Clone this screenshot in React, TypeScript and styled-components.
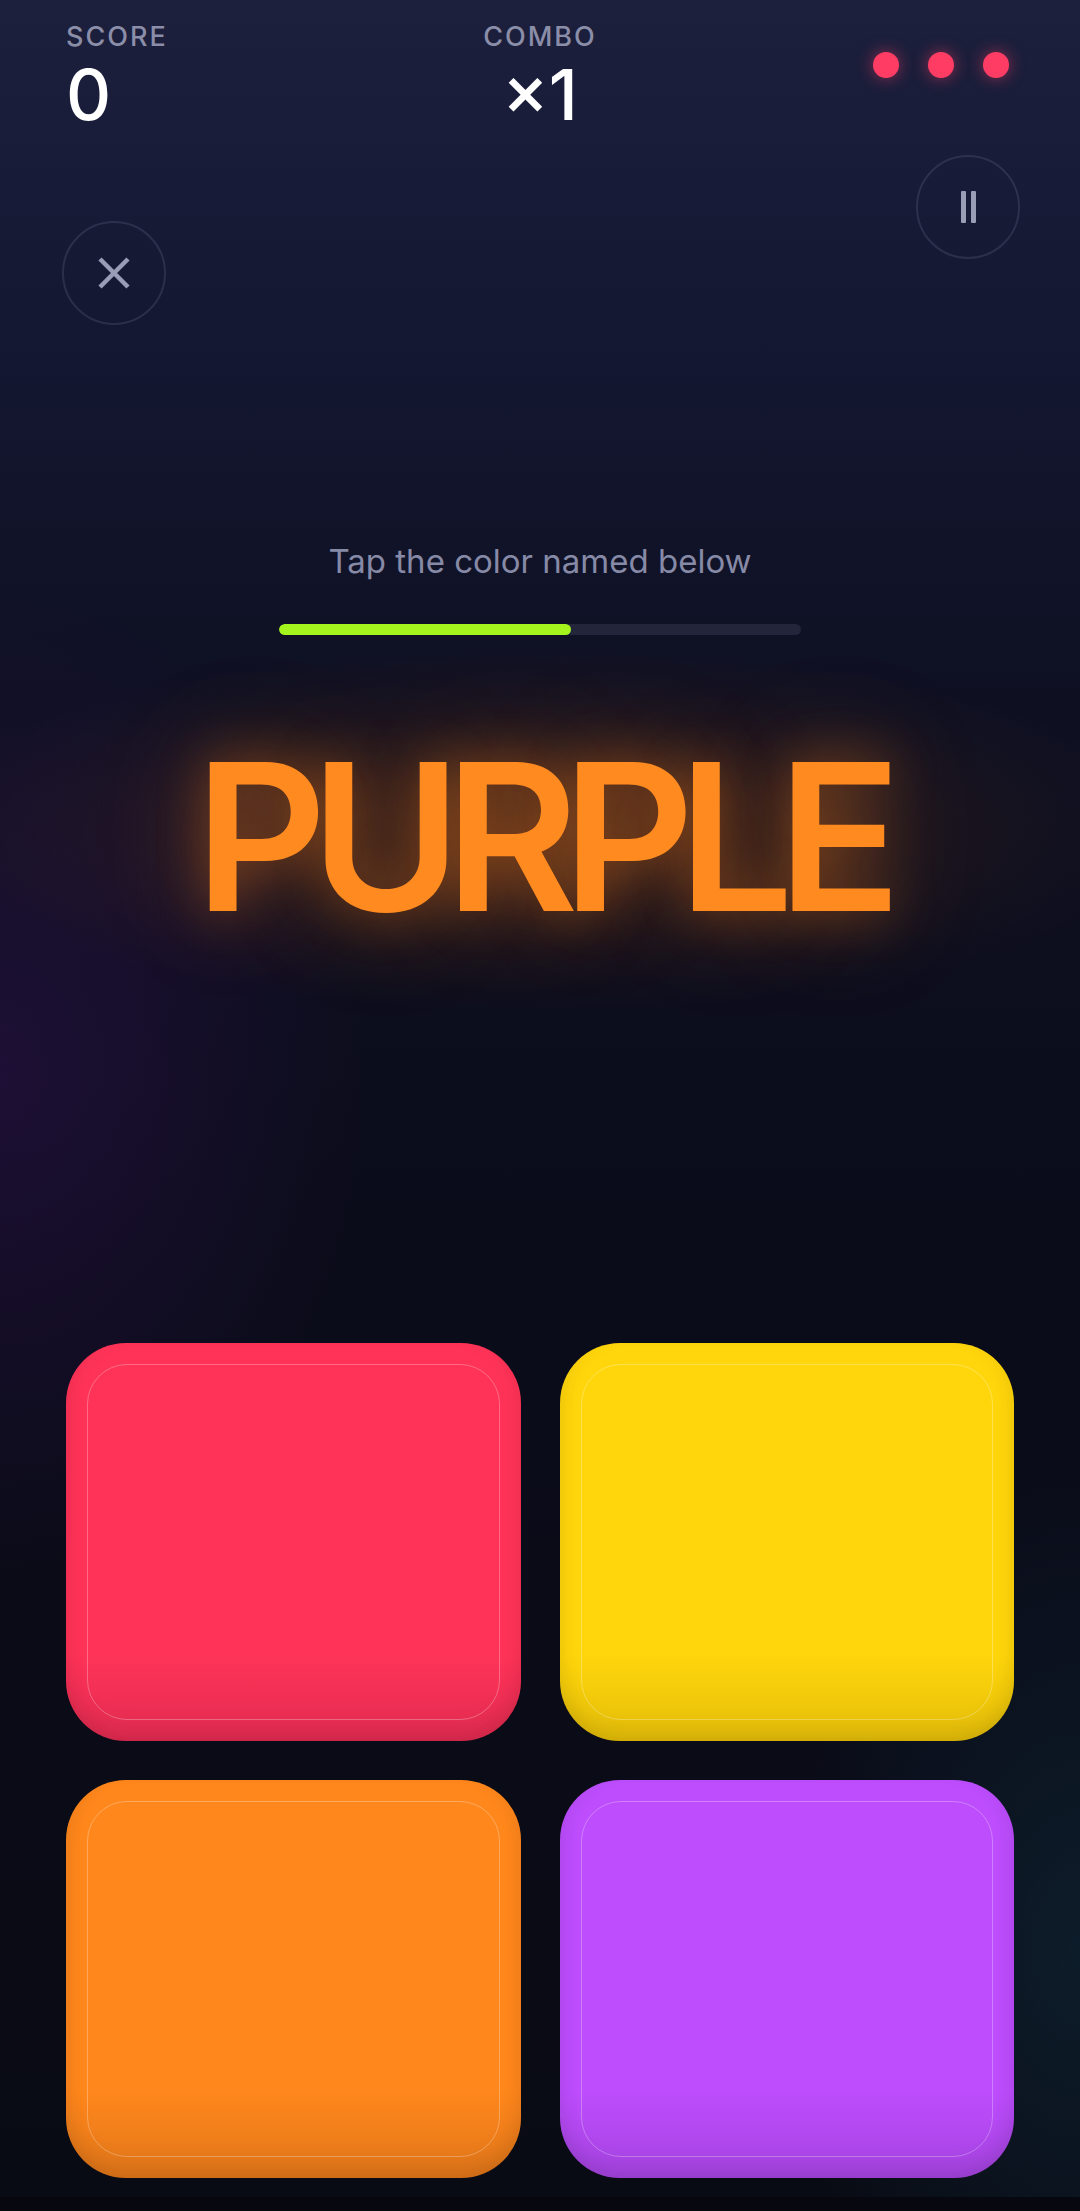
import React from 'react';
import styled, { createGlobalStyle } from 'styled-components';

const GlobalStyle = createGlobalStyle`
  html, body {
    margin: 0;
    padding: 0;
    background: #07080f;
  }
  * {
    box-sizing: border-box;
  }
`;

const Screen = styled.div`
  width: 1080px;
  min-height: 2197px;
  padding: 21px 66px 19px;
  display: flex;
  flex-direction: column;
  font-family: Inter, 'Noto Sans', sans-serif;
  background:
    radial-gradient(ellipse 900px 260px at 540px 830px, rgba(120, 60, 20, 0.3), transparent 70%),
    radial-gradient(ellipse 520px 700px at 0px 1080px, rgba(70, 20, 110, 0.3), transparent 70%),
    radial-gradient(ellipse 420px 700px at 1080px 1950px, rgba(20, 60, 80, 0.35), transparent 70%),
    linear-gradient(180deg, #1c203d 0%, #151833 14%, #0e1022 32%, #0b0c1a 55%, #090b14 100%);
`;

const TopBar = styled.div`
  display: grid;
  grid-template-columns: 1fr auto 1fr;
  align-items: start;
`;

const Stat = styled.div<{ $center?: boolean }>`
  display: flex;
  flex-direction: column;
  align-items: ${(p) => (p.$center ? 'center' : 'flex-start')};
`;

const StatLabel = styled.div`
  font-size: 27px;
  line-height: 32px;
  font-weight: 500;
  letter-spacing: 0.075em;
  color: #8b8ea8;
`;

const StatValue = styled.div`
  margin-top: 4px;
  font-size: 70px;
  line-height: 76px;
  font-weight: 500;
  color: #ffffff;
`;

const Lives = styled.div`
  justify-self: end;
  display: flex;
  gap: 29px;
  margin: 31px 5px 0 0;
`;

const Life = styled.span`
  width: 26px;
  height: 26px;
  border-radius: 50%;
  background: #ff3d64;
  box-shadow: 0 0 16px rgba(255, 61, 100, 0.55);
`;

const Controls = styled.div`
  display: flex;
  justify-content: space-between;
  align-items: flex-start;
  margin: 22px -6px 0 -4px;
`;

const RoundButton = styled.button<{ $offset?: number }>`
  width: 104px;
  height: 104px;
  border-radius: 50%;
  border: 2px solid rgba(120, 126, 160, 0.22);
  background: transparent;
  display: flex;
  align-items: center;
  justify-content: center;
  padding: 0;
  margin-top: ${(p) => p.$offset || 0}px;
  cursor: pointer;
  color: #9a9db6;
`;

const PauseBars = styled.div`
  display: flex;
  gap: 5px;

  span {
    width: 5px;
    height: 32px;
    background: #9a9db6;
    border-radius: 1px;
  }
`;

const Prompt = styled.div`
  margin-top: 216px;
  text-align: center;
  font-size: 33px;
  line-height: 40px;
  color: #878aa6;
`;

const Track = styled.div`
  width: 522px;
  height: 11px;
  margin: 43px auto 0;
  border-radius: 6px;
  background: #23263a;
  overflow: hidden;
`;

const Fill = styled.div`
  height: 100%;
  border-radius: 6px;
  background: #a4f41e;
`;

const Word = styled.div<{ $color: string }>`
  margin-top: 99px;
  text-align: center;
  font-size: 205px;
  line-height: 205px;
  font-weight: 600;
  letter-spacing: -0.08em;
  color: ${(p) => p.$color};
  text-shadow:
    0 0 50px rgba(255, 130, 30, 0.4),
    0 0 110px rgba(255, 130, 30, 0.3);
`;

const Grid = styled.div`
  margin-top: auto;
  display: grid;
  grid-template-columns: 1fr 1fr;
  grid-auto-rows: 398px;
  gap: 39px;
`;

const Tile = styled.button<{ $color: string; $shade: string }>`
  display: flex;
  padding: 21px;
  border: none;
  border-radius: 60px;
  cursor: pointer;
  background: linear-gradient(180deg, ${(p) => p.$color} 78%, ${(p) => p.$shade} 100%);
  box-shadow:
    inset 0 -18px 26px -8px rgba(0, 0, 0, 0.1),
    inset 14px 0 20px -12px rgba(0, 0, 0, 0.06),
    inset -14px 0 20px -12px rgba(0, 0, 0, 0.06);
`;

const TileInner = styled.div`
  flex: 1;
  border-radius: 40px;
  border: 1.5px solid rgba(255, 255, 255, 0.28);
`;

const tiles = [
  { name: 'red', color: '#ff3358', shade: '#e42c52' },
  { name: 'yellow', color: '#ffd60c', shade: '#e6bf0a' },
  { name: 'orange', color: '#ff871c', shade: '#e2771a' },
  { name: 'purple', color: '#bd4dfd', shade: '#a744e2' },
];

const App: React.FC = () => {
  const progress = 56;

  return (
    <>
      <GlobalStyle />
      <Screen>
        <TopBar>
          <Stat>
            <StatLabel>SCORE</StatLabel>
            <StatValue>0</StatValue>
          </Stat>
          <Stat $center>
            <StatLabel>COMBO</StatLabel>
            <StatValue>×1</StatValue>
          </Stat>
          <Lives>
            <Life />
            <Life />
            <Life />
          </Lives>
        </TopBar>

        <Controls>
          <RoundButton $offset={66} aria-label="Quit">
            <svg width="34" height="34" viewBox="0 0 34 34">
              <path d="M3 3 L31 31 M31 3 L3 31" stroke="currentColor" strokeWidth="4.5" strokeLinecap="butt" />
            </svg>
          </RoundButton>
          <RoundButton aria-label="Pause">
            <PauseBars>
              <span />
              <span />
            </PauseBars>
          </RoundButton>
        </Controls>

        <Prompt>Tap the color named below</Prompt>
        <Track>
          <Fill style={{ width: `${progress}%` }} />
        </Track>

        <Word $color="#ff8a1f">PURPLE</Word>

        <Grid>
          {tiles.map((t) => (
            <Tile key={t.name} $color={t.color} $shade={t.shade} aria-label={t.name}>
              <TileInner />
            </Tile>
          ))}
        </Grid>
      </Screen>
    </>
  );
};

export default App;
